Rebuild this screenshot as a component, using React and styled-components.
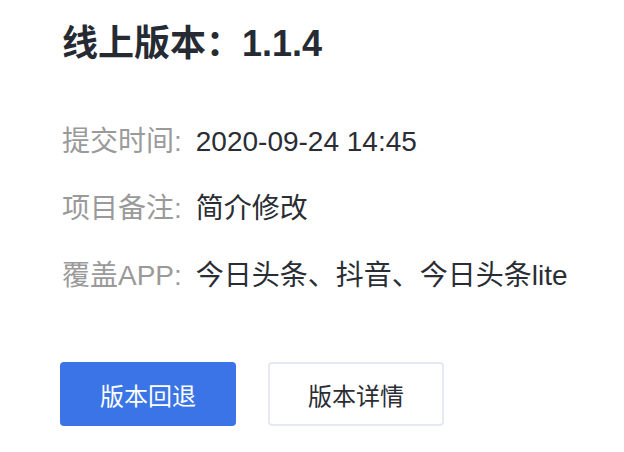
import styled, { createGlobalStyle } from "styled-components";

const GlobalStyle = createGlobalStyle`
    body {
        margin: 0;
        background: #ffffff;
        font-family: "Liberation Sans", "Noto Sans CJK SC", sans-serif;
    }
`;

const info = [
    { label: "提交时间:", value: "2020-09-24 14:45" },
    { label: "项目备注:", value: "简介修改" },
    { label: "覆盖APP:", value: "今日头条、抖音、今日头条lite" },
];

export default function App() {
    return (
        <>
            <GlobalStyle />
            <Page>
                <Title>线上版本：1.1.4</Title>
                <InfoList>
                    {info.map((item) => (
                        <Row key={item.label}>
                            <Label>{item.label}</Label>
                            <Value>{item.value}</Value>
                        </Row>
                    ))}
                </InfoList>
                <Buttons>
                    <Button primary>版本回退</Button>
                    <Button>版本详情</Button>
                </Buttons>
            </Page>
        </>
    );
}

const Page = styled.div`
    padding: 20px 60px 0 60px;
    display: flex;
    flex-direction: column;
`;

const Title = styled.h1`
    margin: 0 0 0 2px;
    font-size: 36px;
    line-height: 48px;
    font-weight: 700;
    color: #262a32;
`;

const InfoList = styled.div`
    margin-top: 54px;
    display: flex;
    flex-direction: column;
    gap: 27px;
`;

const Row = styled.div`
    display: flex;
    align-items: center;
    gap: 14px;
    margin-left: 2px;
    font-size: 28px;
    line-height: 40px;
    white-space: nowrap;
`;

const Label = styled.span`
    flex-shrink: 0;
    color: #9a9a9a;
`;

const Value = styled.span`
    flex-shrink: 0;
    color: #2a2d34;
`;

const Buttons = styled.div`
    margin-top: 66px;
    display: flex;
    gap: 32px;
`;

const Button = styled.button`
    width: 176px;
    height: 64px;
    box-sizing: border-box;
    font-family: inherit;
    font-size: 24px;
    border-radius: 4px;
    cursor: pointer;
    color: ${(p) => (p.primary ? "#ffffff" : "#2a2d34")};
    background: ${(p) => (p.primary ? "#3a74e6" : "#ffffff")};
    border: ${(p) => (p.primary ? "none" : "2px solid #e6e8f2")};
`;
